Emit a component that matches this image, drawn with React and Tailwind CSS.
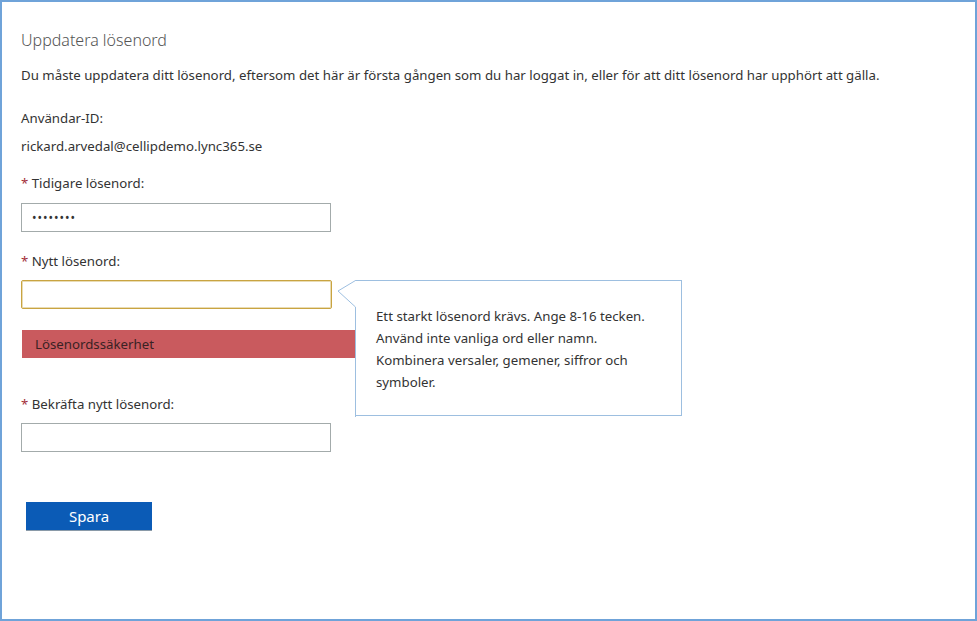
import { useState } from "react";

const font = { fontFamily: '"Segoe UI", "Noto Sans", "Open Sans", sans-serif' };

function Label({ children, required }) {
  return (
    <div className="text-[13.25px] leading-[18px] text-[#333]">
      {required && <span className="text-[#a3303a]">* </span>}
      {children}
    </div>
  );
}

export default function UpdatePassword() {
  const [oldPassword, setOldPassword] = useState("12345678");
  const [newPassword, setNewPassword] = useState("");
  const [confirm, setConfirm] = useState("");

  return (
    <div
      className="w-[977px] h-[621px] bg-white border-2 border-[#6fa3d9] pl-[19px] pt-[24px] text-[#333]"
      style={font}
    >
      <h1 className="text-[16px] leading-[28px] font-light text-[#555]">Uppdatera lösenord</h1>
      <p className="mt-[12px] text-[13.25px] leading-[18px]">
        Du måste uppdatera ditt lösenord, eftersom det här är första gången som du har loggat in, eller för att ditt
        lösenord har upphört att gälla.
      </p>

      <div className="mt-[25px]">
        <Label>Användar-ID:</Label>
      </div>
      <div className="mt-[10px] text-[13.25px] leading-[18px]">rickard.arvedal@cellipdemo.lync365.se</div>

      <div className="mt-[19px]">
        <Label required>Tidigare lösenord:</Label>
      </div>
      <input
        type="password"
        value={oldPassword}
        onChange={(e) => setOldPassword(e.target.value)}
        className="mt-[11px] block w-[310px] h-[29px] border border-[#a3abab] px-[10px] text-[12px] tracking-[1px] outline-none"
      />

      <div className="mt-[20px]">
        <Label required>Nytt lösenord:</Label>
      </div>
      <div className="relative mt-[10px]">
        <input
          type="password"
          value={newPassword}
          onChange={(e) => setNewPassword(e.target.value)}
          className="block w-[311px] h-[29px] rounded-[2px] border border-[#c9a441] shadow-[inset_0_0_0_1px_#e9dcb5] px-[10px] text-[13px] outline-none"
        />

        <div className="mt-[21px] w-[340px] h-[28px] ml-px bg-[#c95a5e] pl-[13px] text-[13.25px] leading-[28px] text-[#3a2224]">
          Lösenordssäkerhet
        </div>

        {/* hint bubble with a left-pointing arrow */}
        <div className="absolute left-[334px] top-0 w-[327px] h-[136px] bg-white border border-[#9dbfe0] border-l-0 pl-[21px] pt-[24px] text-[13.25px] leading-[22px] text-[#333]">
          <svg className="absolute left-[-18px] top-[-1px]" width="19" height="137" viewBox="0 0 19 137">
            <path d="M18.5 0.5 L1 11 L18.5 27 L18.5 137" fill="white" stroke="#9dbfe0" strokeWidth="1" />
          </svg>
          <div>Ett starkt lösenord krävs. Ange 8-16 tecken.</div>
          <div>Använd inte vanliga ord eller namn.</div>
          <div>Kombinera versaler, gemener, siffror och</div>
          <div>symboler.</div>
        </div>
      </div>

      <div className="mt-[37px]">
        <Label required>Bekräfta nytt lösenord:</Label>
      </div>
      <input
        type="password"
        value={confirm}
        onChange={(e) => setConfirm(e.target.value)}
        className="mt-[10px] block w-[310px] h-[29px] border border-[#a3abab] px-[10px] text-[13px] outline-none"
      />

      <button className="mt-[50px] ml-[5px] block w-[126px] h-[29px] bg-[#0b5bb6] border-b border-[#8a9aa8] text-white text-[15px] leading-[28px]">
        Spara
      </button>
    </div>
  );
}
